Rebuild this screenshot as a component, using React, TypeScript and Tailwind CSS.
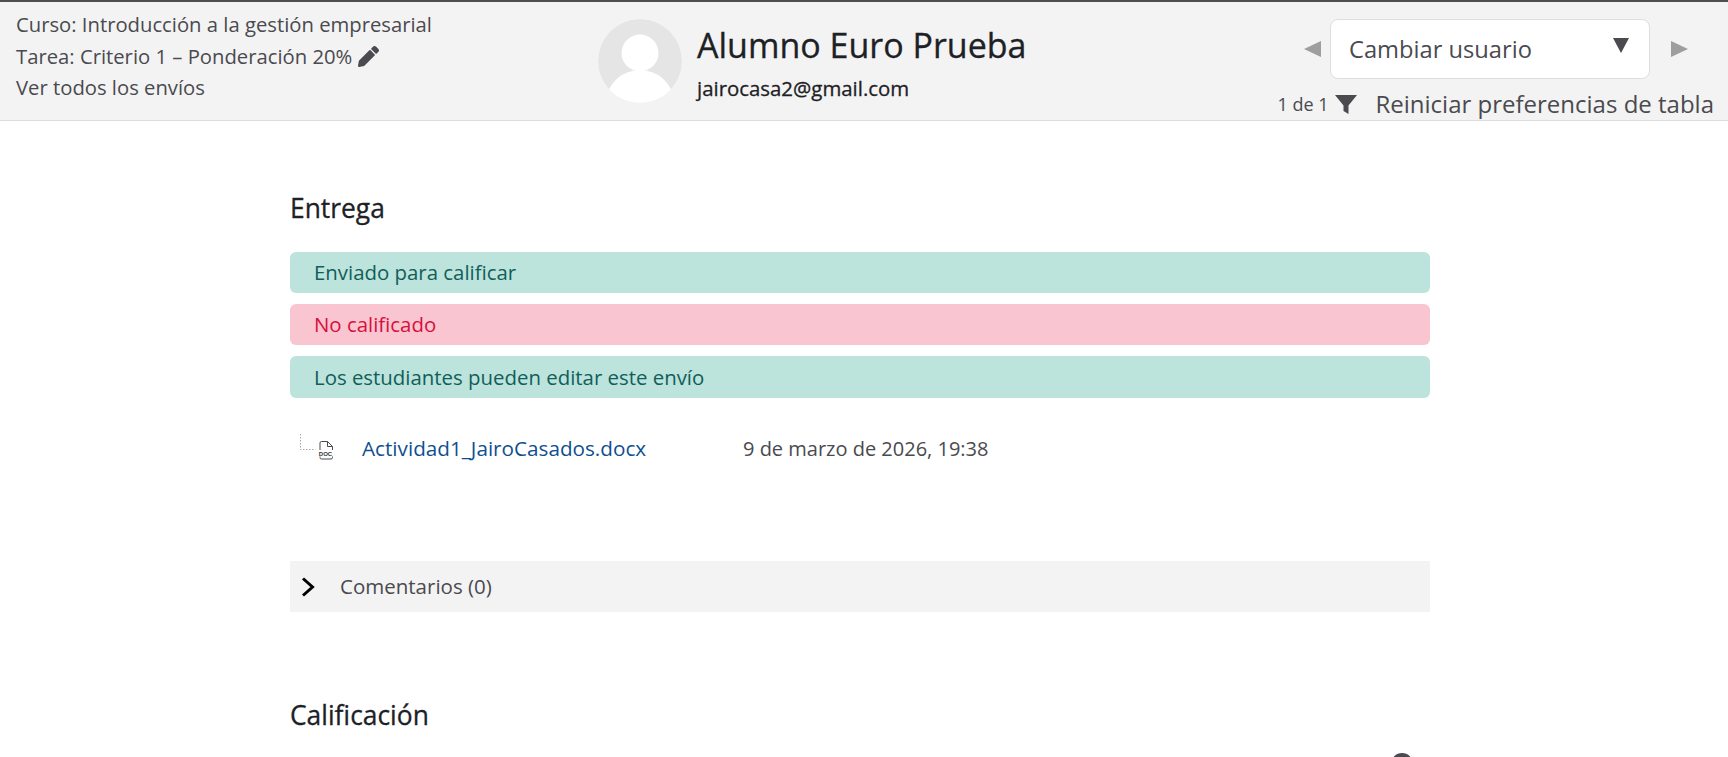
export default function App() {
  return (
    <div className="h-[757px] overflow-hidden bg-white font-['Open_Sans',sans-serif] text-[#4a4a4f]">
      <header className="flex h-[121px] border-t-2 border-b border-t-[#4f4f4f] border-b-[#dcdcdc] bg-[#f3f3f3]">
        <div className="w-[598px] pl-4 pt-[7px] text-[20.250px] leading-[31.5px]">
          <div>Curso: Introducción a la gestión empresarial</div>
          <div className="flex items-center gap-[6px]">
            Tarea: Criterio 1 – Ponderación 20%
            <svg viewBox="0 0 512 512" className="h-[21px] w-[21px] fill-[#4a4a4f]">
              <path d="M497.9 142.1l-46.1 46.1c-4.7 4.7-12.3 4.7-17 0l-111-111c-4.7-4.7-4.7-12.3 0-17l46.1-46.1c18.7-18.7 49.1-18.7 67.9 0l60.1 60.1c18.8 18.7 18.8 49.1 0 67.9zM284.2 99.8L21.6 362.4.4 483.9c-2.9 16.4 11.4 30.6 27.8 27.8l121.5-21.3 262.6-262.6c4.7-4.7 4.7-12.3 0-17l-111-111c-4.8-4.7-12.4-4.7-17.1 0z" />
            </svg>
          </div>
          <div>Ver todos los envíos</div>
        </div>

        <div className="flex flex-1 pt-[17px]">
          <svg viewBox="0 0 84 84" className="h-[84px] w-[84px] rounded-full">
            <circle cx="42" cy="42" r="42" fill="#e5e5e5" />
            <circle cx="42" cy="34" r="18.500" fill="#fff" />
            <ellipse cx="42" cy="84" rx="34" ry="33" fill="#fff" />
          </svg>
          <div className="ml-[15px] text-[#1d2125]">
            <div className="-mt-[1px] text-[34px] leading-[54px] [-webkit-text-stroke:0.3px_#1d2125]">Alumno Euro Prueba</div>
            <div className="mt-[4px] text-[20.400px] leading-[24px] [-webkit-text-stroke:0.3px_#1d2125]">jairocasa2@gmail.com</div>
          </div>
        </div>

        <div className="flex w-[460px] flex-col items-end pr-[14px] pt-[17px]">
          <div className="flex items-center pr-[26px]">
            <span className="h-0 w-0 border-y-[8px] border-r-[17px] border-y-transparent border-r-[#9e9e9e]" />
            <div className="ml-[9px] mr-[15px] flex h-[60px] w-[320px] justify-between rounded-lg border border-[#dedede] bg-white pl-[18px] pr-[20px] text-[23.700px] leading-[58px]">
              Cambiar usuario
              <span className="mt-[18px] h-0 w-0 border-x-[8px] border-t-[15px] border-x-transparent border-t-[#4a4a4f]" />
            </div>
            <span className="ml-[6px] h-0 w-0 border-y-[8px] border-l-[17px] border-y-transparent border-l-[#9e9e9e]" />
          </div>
          <div className="mt-[10px] flex items-center text-[24px] leading-[30px]">
            <span className="text-[18px]">1 de 1</span>
            <svg viewBox="0 0 24 24" className="mx-[5px] ml-[6px] h-[24px] w-[24px] fill-[#4a4a4f]">
              <path d="M1 3h22L14.5 13.5V22l-5-3v-5.500z" />
            </svg>
            <span className="ml-[12px]">Reiniciar preferencias de tabla</span>
          </div>
        </div>
      </header>

      <main className="ml-[290px] w-[1140px] text-[#4a4a4f]">
        <h3 className="mt-[71px] text-[26.400px] leading-[32px] text-[#1d2125] [-webkit-text-stroke:0.3px_#1d2125]">Entrega</h3>

        <div className="mt-[28px] flex flex-col gap-[11px] text-[20.400px]">
          <div className="h-[41px] rounded-md bg-[#bce3dc] pl-6 leading-[41px] text-[#115e59]">Enviado para calificar</div>
          <div className="h-[41px] rounded-md bg-[#f9c5d0] pl-6 leading-[41px] text-[#d80f3c]">No calificado</div>
          <div className="h-[42px] rounded-md bg-[#bce3dc] pl-6 leading-[42px] text-[#115e59]">Los estudiantes pueden editar este envío</div>
        </div>

        <div className="mt-[21px] flex h-[60px] items-center text-[20px]">
          <svg viewBox="0 0 40 32" className="ml-[9px] h-[32px] w-[40px]">
            <path d="M1.500 1v15.500h15" fill="none" stroke="#a8a8a8" strokeDasharray="1.500 1.500" />
            <path d="M22.500 8.500h6l5 5v11a1.500 1.500 0 0 1-1.500 1.500h-9.500a1.500 1.500 0 0 1-1.500-1.500v-14.500a1.500 1.500 0 0 1 1.500-1.500z" fill="#fff" stroke="#4a4a4f" />
            <path d="M28.500 8.500v5h5" fill="none" stroke="#4a4a4f" />
            <rect x="18.500" y="17" width="16" height="6.500" fill="#fff" />
            <text x="26.500" y="23" textAnchor="middle" fontSize="6" fontWeight="700" fill="#333" fontFamily="Liberation Sans, sans-serif">DOC</text>
          </svg>
          <a className="ml-[23px] w-[381px] text-[20.700px] text-[#0f4f8f]">Actividad1_JairoCasados.docx</a>
          <span>9 de marzo de 2026, 19:38</span>
        </div>

        <div className="mt-[82px] flex h-[51px] items-center bg-[#f3f3f3] text-[20.500px]">
          <svg viewBox="0 0 16 24" className="ml-[10px] h-[24px] w-[16px]">
            <path d="M3 3.500 12.500 12 3 20.500" fill="none" stroke="#000" strokeWidth="3" />
          </svg>
          <span className="ml-[24px]">Comentarios (0)</span>
        </div>

        <h3 className="mt-[87px] text-[26.400px] leading-[32px] text-[#1d2125] [-webkit-text-stroke:0.3px_#1d2125]">Calificación</h3>

        <div className="mt-[22px] flex items-start justify-between text-[20.400px] leading-[24px]">
          <span className="font-bold text-[#1d2125]">Calificación sobre 100</span>
          <span className="mr-[17px] h-[22px] w-[22px] rounded-full bg-[#4a4a4f]" />
        </div>
      </main>
    </div>
  );
}
